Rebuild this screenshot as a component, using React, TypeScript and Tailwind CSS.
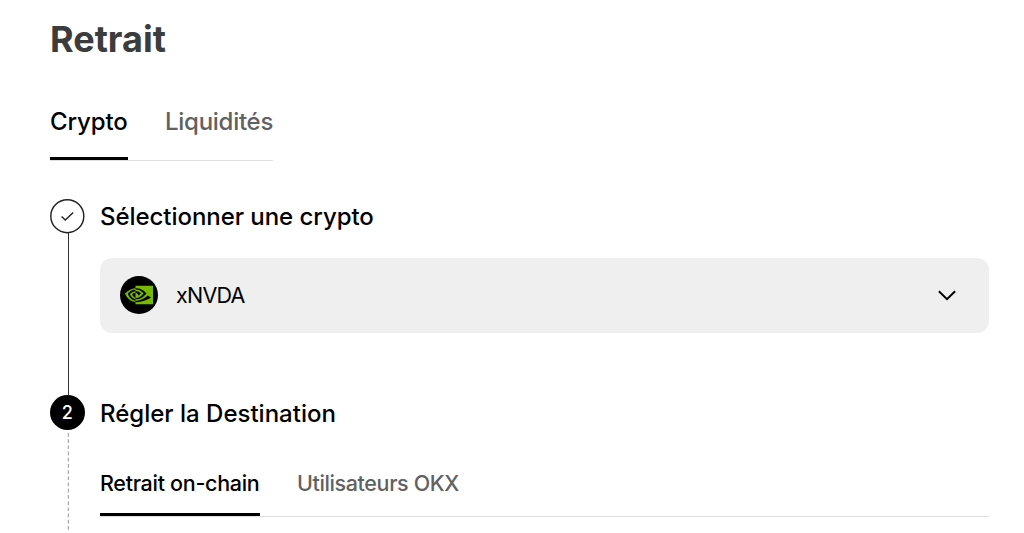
import type { ReactNode } from "react";
import { SiNvidia } from "react-icons/si";

function Step({ marker, line, title, className, children }: { marker: ReactNode; line: ReactNode; title: ReactNode; className: string; children: ReactNode }) {
  return (
    <section className={`flex ${className}`}>
      <div className="flex w-[50px] shrink-0 flex-col items-start">
        {marker}
        {line}
      </div>
      <div className="min-w-0 flex-1">
        <h2 className="flex h-[34px] items-center whitespace-nowrap text-[24px] font-medium">{title}</h2>
        {children}
      </div>
    </section>
  );
}

export default function App() {
  return (
    <main className="flex h-[533px] w-[1024px] flex-col overflow-hidden bg-white pl-[50px] pr-[35px] pt-[15px] font-['Inter',sans-serif] text-black">
      <h1 className="h-12 text-[36px] font-bold leading-[48px] text-[#3c3c3c]">Retrait</h1>

      <nav className="mt-[39px] flex h-[59px] w-[223px] shrink-0 justify-between border-b border-[#dedede] text-[24px] leading-[40px]">
        <button className="flex h-[58px] w-[78px] border-b-[3px] border-black font-medium">
          <span className="whitespace-nowrap tracking-[-0.1px]">Crypto</span>
        </button>
        <button className="flex w-[108px] font-medium text-[#616161]">
          <span className="whitespace-nowrap tracking-[-0.27px]">Liquidités</span>
        </button>
      </nav>

      <Step
        className="mt-[38px] h-[196px] shrink-0"
        title={<span className="pt-px tracking-[-0.05px]">Sélectionner une crypto</span>}
        marker={
          <svg className="shrink-0" width="35" height="35" viewBox="0 0 35 35" fill="none" stroke="#222" strokeWidth="1.4">
            <circle cx="17.3" cy="17.2" r="16.5" />
            <path d="m11.6 17.5 3.7 3.5 7.9-7.6" />
          </svg>
        }
        line={<span className="-mt-px ml-[18px] w-px flex-1 bg-[#333]" />}
      >
        <button className="mt-[25px] flex h-[75px] w-full items-center rounded-xl bg-[#efefef] pl-5 pr-[33px]">
          <span className="mb-px flex size-[38px] items-center justify-center rounded-full bg-black">
            <SiNvidia className="mr-px size-7 text-[#76b900]" />
          </span>
          <span className="ml-[18px] text-[21.5px] leading-none tracking-[-0.75px]">xNVDA</span>
          <svg className="ml-auto" width="18" height="12" viewBox="0 0 18 12" fill="none" stroke="#000" strokeWidth="2">
            <path d="m.9 1.2 8.1 8 8.1-8" />
          </svg>
        </button>
      </Step>

      <Step
        className="h-[138px] shrink-0"
        title={<span className="pt-[3px]">Régler la Destination</span>}
        marker={
          <span className="flex size-[34.5px] shrink-0 items-center justify-center rounded-full bg-black text-[18px] font-medium text-white">2</span>
        }
        line={
          <svg className="ml-[17px] mt-[2px] flex-1" width="3" height="101" stroke="#aaa" strokeWidth="1.3" strokeDasharray="3.7 2.5">
            <path d="M1.4 1V98" />
          </svg>
        }
      >
        <nav className="mt-[34px] flex h-[54px] border-b border-[#dedede] text-[21.5px] font-medium leading-[40px]">
          <button className="flex h-[53px] w-[160px] border-b-[3px] border-black">
            <span className="whitespace-nowrap tracking-[-0.3px]">Retrait on-chain</span>
          </button>
          <button className="ml-[37px] flex text-[#616161]">
            <span className="whitespace-nowrap tracking-[-0.38px]">Utilisateurs OKX</span>
          </button>
        </nav>
      </Step>
    </main>
  );
}
